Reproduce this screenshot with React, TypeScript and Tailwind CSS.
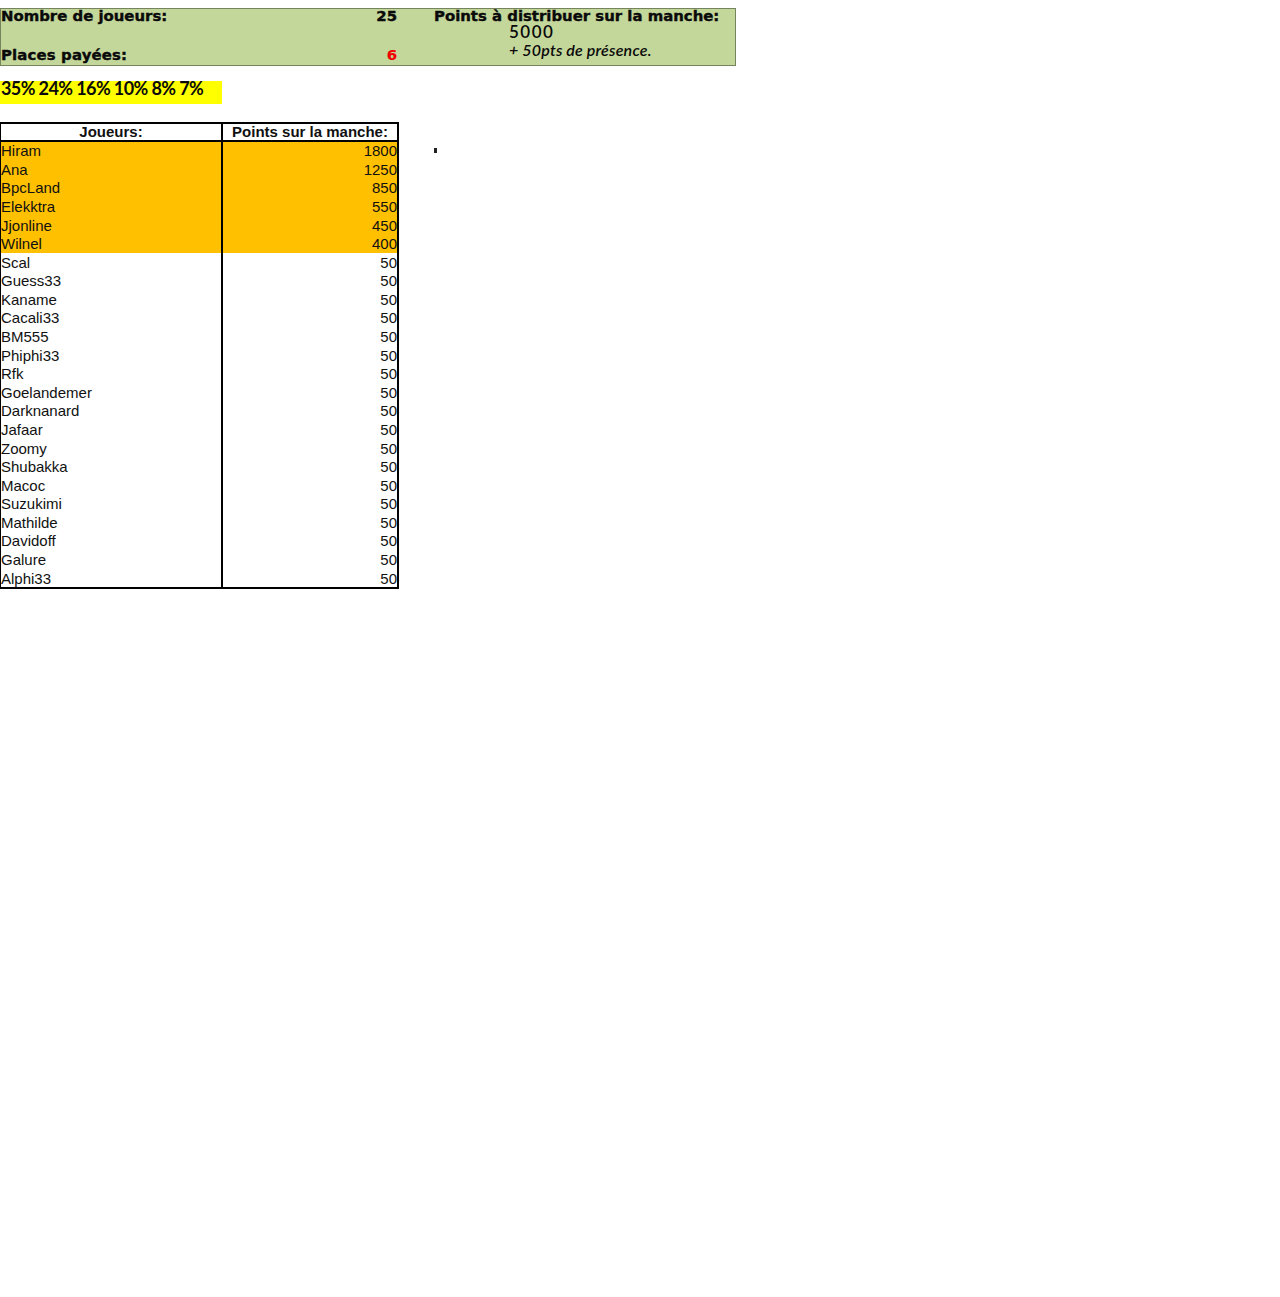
const paid = [
  ['Hiram', 1800],
  ['Ana', 1250],
  ['BpcLand', 850],
  ['Elekktra', 550],
  ['Jjonline', 450],
  ['Wilnel', 400],
];

const others = [
  'Scal', 'Guess33', 'Kaname', 'Cacali33', 'BM555', 'Phiphi33', 'Rfk', 'Goelandemer', 'Darknanard',
  'Jafaar', 'Zoomy', 'Shubakka', 'Macoc', 'Suzukimi', 'Mathilde', 'Davidoff', 'Galure', 'Alphi33',
];

function Row({ name, points, paid }: { name: string; points: number; paid?: boolean }) {
  return (
    <div className={`flex h-[18.58px] items-center text-[15px] leading-none text-[#111] ${paid ? 'bg-[#ffc000]' : 'bg-white'}`}>
      <div className="flex h-full w-[222px] items-center border-r-2 border-black">{name}</div>
      <div className="flex-1 text-right">{points}</div>
    </div>
  );
}

export default function App() {
  return (
    <div className="min-h-[1297px] bg-white pt-2 font-['Liberation_Sans',sans-serif]">
      <div className="flex h-[58px] w-[736px] border border-[#75845c] bg-[#c4d79b] font-['DejaVu_Sans',sans-serif] text-[14.9px] font-bold leading-none text-[#0a0a0a] [-webkit-text-stroke:0.4px]">
        <div className="flex w-[396px] flex-col justify-between pb-[2px]">
          <div className="flex justify-between">
            <span>Nombre de joueurs:</span>
            <span>25</span>
          </div>
          <div className="flex justify-between">
            <span className="tracking-[0.15px]">Places payées:</span>
            <span className="text-[#f00000] [-webkit-text-stroke:0.2px]">6</span>
          </div>
        </div>
        <div className="pl-[37px]">
          <div className="whitespace-nowrap">Points à distribuer sur la manche:</div>
          <div className="pl-[75px] font-['Lato',sans-serif] text-[17px] font-semibold leading-[15px] tracking-[1.5px] [-webkit-text-stroke:0px]">5000</div>
          <div className="mt-[3px] whitespace-nowrap pl-[75px] font-['Lato',sans-serif] text-[16px] font-semibold italic leading-none tracking-[0.2px] [-webkit-text-stroke:0px]">+ 50pts de présence.</div>
        </div>
      </div>

      <div className="mt-[15px] h-[23px] w-[222px] bg-[#ffff00] font-['Lato',sans-serif] text-[18px] font-bold leading-none tracking-[-0.6px] text-[#0a0a0a]">
        <div className="-translate-y-[2px] whitespace-nowrap pl-px">35% 24% 16% 10% 8% 7%</div>
      </div>

      <div className="mt-[18px] flex items-start">
        <div className="w-[399px] border-y-2 border-r-2 border-l border-black">
          <div className="flex h-[17.5px] items-center border-b-2 border-black text-[15px] font-bold leading-none text-[#111]">
            <div className="flex h-full w-[222px] items-center justify-center border-r-2 border-black">Joueurs:</div>
            <div className="flex-1 text-center">Points sur la manche:</div>
          </div>
          {paid.map(([name, points]) => (
            <Row key={name} name={name as string} points={points as number} paid />
          ))}
          {others.map((name) => (
            <Row key={name} name={name} points={50} />
          ))}
        </div>
        <div className="ml-[35px] mt-[26px] h-[5px] w-[3px] bg-[#222]" />
      </div>
    </div>
  );
}
